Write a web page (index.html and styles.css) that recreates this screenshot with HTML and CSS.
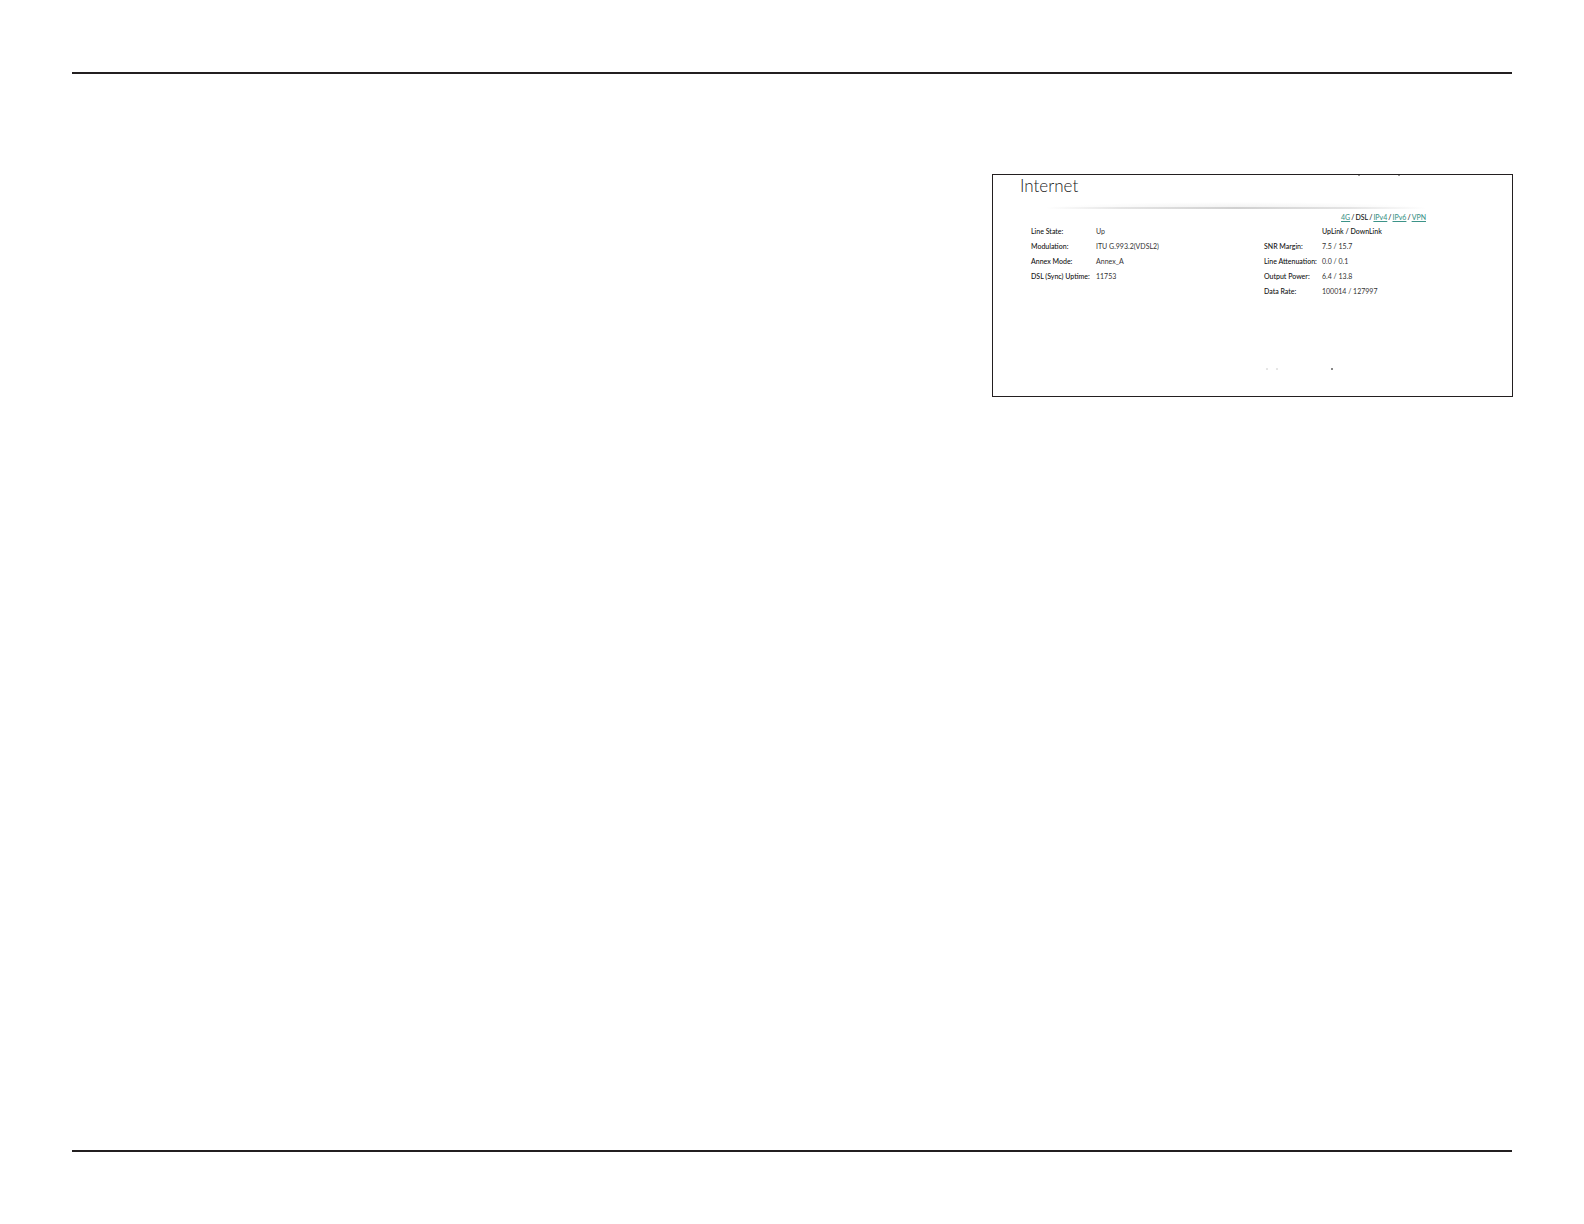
FILE: index.html
```html
<!DOCTYPE html>
<html lang="en">
<head>
<meta charset="utf-8">
<title>Internet</title>
<link rel="stylesheet" href="styles.css">
</head>
<body>
<main class="sheet">
  <section class="panel">
    <svg class="marks marks-top" width="60" height="1" aria-hidden="true"><path d="M1 0h2M41 0h2" stroke="#999" stroke-width="2"/></svg>
    <h1 class="title">Internet</h1>
    <svg class="divider" viewBox="0 0 384 14" preserveAspectRatio="none" aria-hidden="true">
      <defs>
        <radialGradient id="glow" cx="0.5" cy="1" r="0.5">
          <stop offset="0" stop-color="#f0f0f0"/>
          <stop offset="1" stop-color="#fff"/>
        </radialGradient>
        <linearGradient id="rule">
          <stop offset="0" stop-color="#fff"/>
          <stop offset="0.2" stop-color="#e4e4e4"/>
          <stop offset="0.5" stop-color="#d0d0d0"/>
          <stop offset="0.8" stop-color="#e4e4e4"/>
          <stop offset="1" stop-color="#fff"/>
        </linearGradient>
      </defs>
      <path d="M0 0h384v12H0z" fill="url(#glow)"/>
      <path d="M0 11h384v2H0z" fill="url(#rule)"/>
    </svg>
    <nav class="tabs"><a href="#4g">4G</a><span>/</span><span>DSL</span><span>/</span><a href="#ipv4">IPv4</a><span>/</span><a href="#ipv6">IPv6</a><span>/</span><a href="#vpn">VPN</a></nav>
    <div class="stats">
      <table class="line">
        <tr><th scope="row">Line State:</th><td>Up</td></tr>
        <tr><th scope="row">Modulation:</th><td>ITU G.993.2(VDSL2)</td></tr>
        <tr><th scope="row">Annex Mode:</th><td>Annex_A</td></tr>
        <tr><th scope="row">DSL (Sync) Uptime:</th><td>11753</td></tr>
      </table>
      <table class="rates">
        <tr><td></td><th scope="col">UpLink / DownLink</th></tr>
        <tr><th scope="row">SNR Margin:</th><td>7.5 / 15.7</td></tr>
        <tr><th scope="row">Line Attenuation:</th><td>0.0 / 0.1</td></tr>
        <tr><th scope="row">Output Power:</th><td>6.4 / 13.8</td></tr>
        <tr><th scope="row">Data Rate:</th><td>100014 / 127997</td></tr>
      </table>
    </div>
    <svg class="marks marks-bottom" width="70" height="4" aria-hidden="true"><path d="M1 2h2M11 2h2" stroke="#ccc"/><path d="M66 2h2" stroke="#888" stroke-width="2"/></svg>
  </section>
</main>
</body>
</html>
```
FILE: styles.css
```css
* {
  box-sizing: border-box;
}

body {
  margin: 0;
  padding: 72px;
  background: #fff;
  color: #333;
  font: 7px/15px Lato, "Open Sans", sans-serif;
}

.sheet {
  display: grid;
  grid-template-columns: 920fr 520fr;
  align-items: start;
  min-height: calc(100vh - 144px);
  padding-top: 100px;
  border-top: 2px solid #231f20;
  border-bottom: 2px solid #231f20;
}

.panel {
  position: relative;
  grid-column: 2;
  margin-right: -1px;
  padding: 0 86px 25px 27px;
  border: 1px solid #231f20;
}

.title {
  margin: 0;
  font-size: 17px;
  font-weight: 300;
  line-height: 21px;
  color: #222;
}

.divider {
  display: block;
  width: 100%;
  height: 14px;
  padding-left: 26px;
}

.tabs {
  display: flex;
  justify-content: flex-end;
  gap: 1px;
  font-weight: 500;
  color: #111;
}

.tabs a {
  color: #3c9388;
}

.stats {
  display: grid;
  grid-template-columns: 233fr 162fr;
  align-items: start;
  margin-top: -1px;
  padding-left: 11px;
}

table {
  width: 100%;
  table-layout: fixed;
  border-collapse: collapse;
}

th,
td {
  height: 15px;
  padding: 0;
  text-align: left;
  white-space: nowrap;
}

th {
  color: #111;
  font-weight: 500;
}

.line th:first-child {
  width: 65px;
}

.rates tr > :first-child {
  width: 58px;
}

.marks {
  display: block;
}

.marks-top {
  position: absolute;
  top: 0;
  right: 95px;
}

.marks-bottom {
  margin: 68px 0 0 245px;
}
```
